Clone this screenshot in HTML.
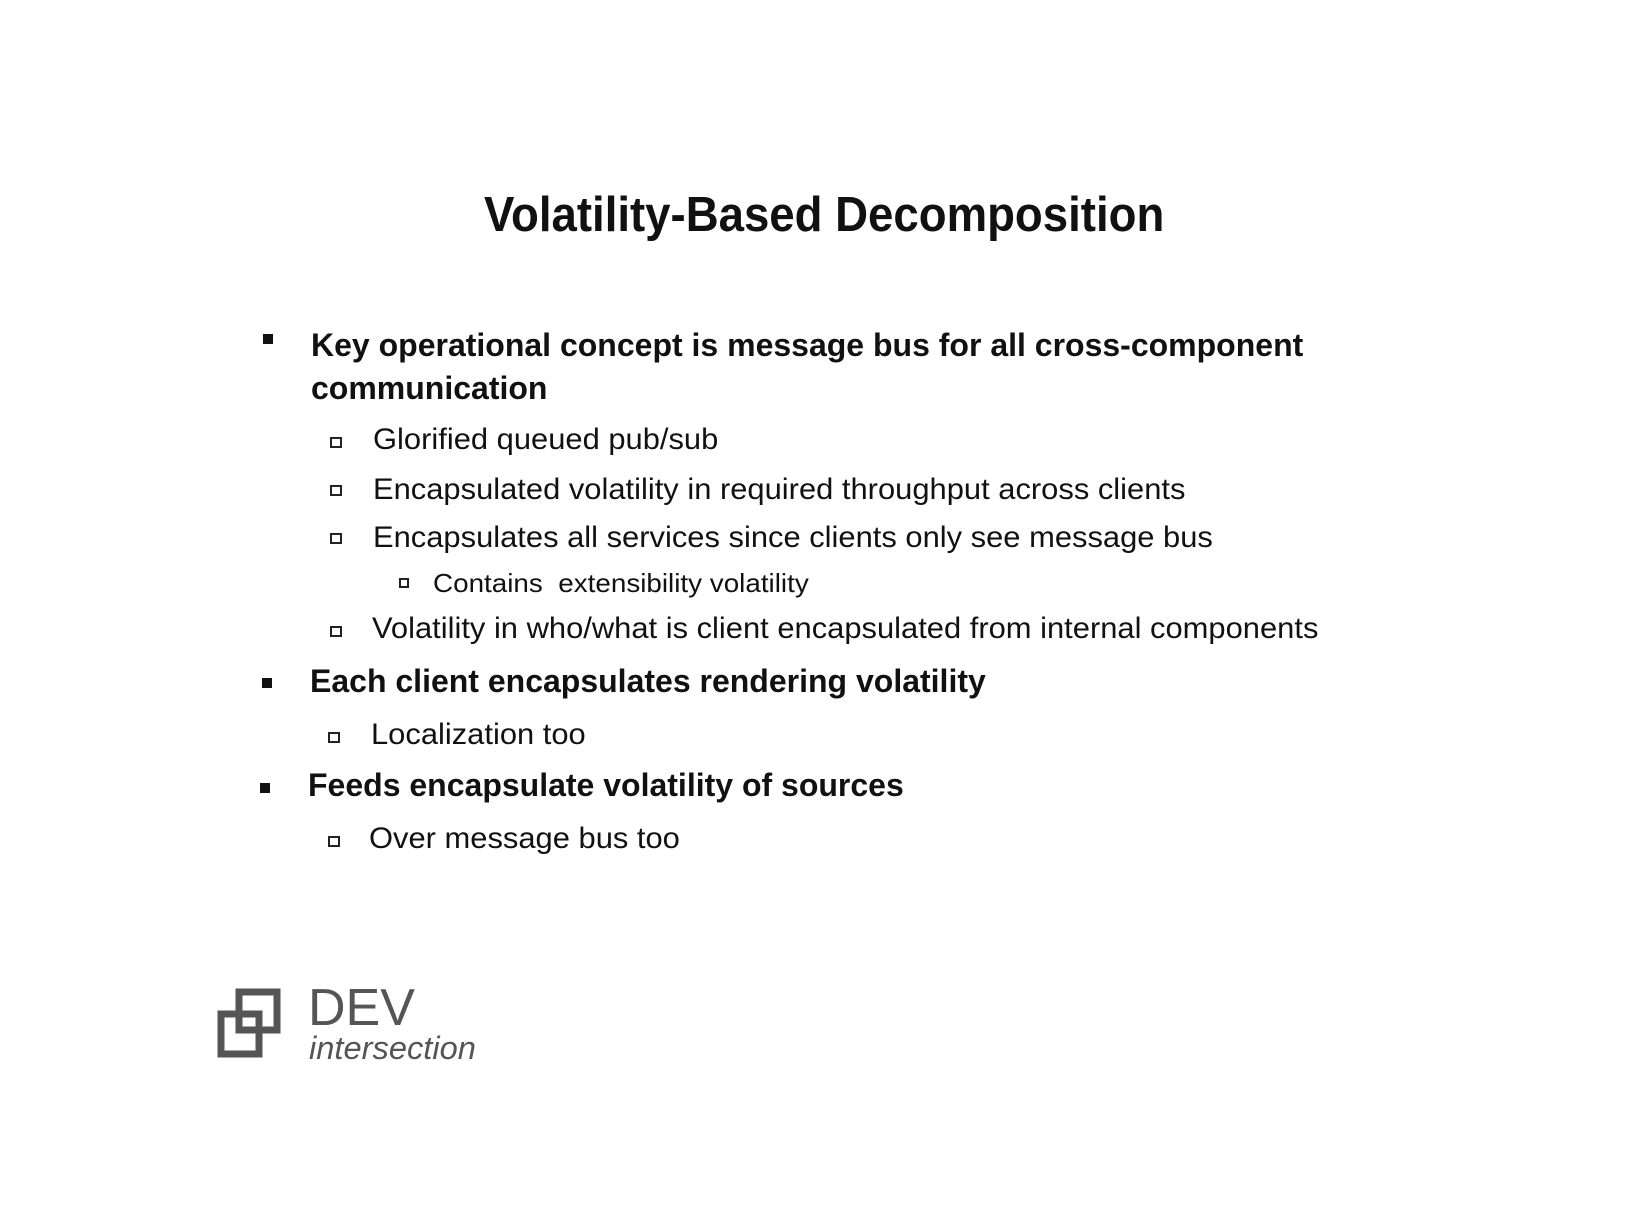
<!DOCTYPE html>
<html><head><meta charset="utf-8"><style>
body{margin:0;width:1632px;height:1224px;background:#fff;position:relative;overflow:hidden;font-family:"Liberation Sans",sans-serif;color:#111}
.t{position:absolute;white-space:nowrap;line-height:1;transform-origin:left top;transform:scaleX(1.03)}
.b{font-weight:bold;transform:scaleX(1.0)}
.sq{position:absolute;width:10px;height:10px;background:#111}
.hs{position:absolute;width:8px;height:7px;border:2px solid #222}
</style></head><body>
<div class="t b" style="left:484px;top:191px;font-size:49px;transform:scaleX(0.93)">Volatility-Based Decomposition</div>

<div class="sq" style="left:263px;top:334px"></div>
<div class="t b" style="left:311px;top:329px;font-size:32px">Key operational concept is message bus for all cross-component</div>
<div class="t b" style="left:311px;top:372px;font-size:32px">communication</div>

<div class="hs" style="left:330px;top:437px"></div>
<div class="t" style="left:373px;top:425px;font-size:30px">Glorified queued pub/sub</div>
<div class="hs" style="left:330px;top:485px"></div>
<div class="t" style="left:373px;top:475px;font-size:30px">Encapsulated volatility in required throughput across clients</div>
<div class="hs" style="left:330px;top:533px"></div>
<div class="t" style="left:373px;top:523px;font-size:30px">Encapsulates all services since clients only see message bus</div>
<div class="hs" style="left:399px;top:578px;width:6px;height:6px"></div>
<div class="t" style="left:433px;top:570px;font-size:26px;transform:scaleX(1.07)">Contains&nbsp; extensibility volatility</div>
<div class="hs" style="left:330px;top:626px"></div>
<div class="t" style="left:372px;top:614px;font-size:30px">Volatility in who/what is client encapsulated from internal components</div>

<div class="sq" style="left:262px;top:678px"></div>
<div class="t b" style="left:310px;top:665px;font-size:32px">Each client encapsulates rendering volatility</div>
<div class="hs" style="left:328px;top:732px"></div>
<div class="t" style="left:371px;top:720px;font-size:30px">Localization too</div>

<div class="sq" style="left:260px;top:783px"></div>
<div class="t b" style="left:308px;top:769px;font-size:32px">Feeds encapsulate volatility of sources</div>
<div class="hs" style="left:328px;top:836px"></div>
<div class="t" style="left:369px;top:824px;font-size:30px">Over message bus too</div>

<svg style="position:absolute;left:215px;top:988px" width="70" height="76" viewBox="0 0 70 76">
<g fill="none" stroke="#555" stroke-width="7">
<rect x="24" y="4" width="38" height="38"/>
<rect x="6" y="26" width="38" height="40"/>
</g></svg>
<div class="t" style="left:308px;top:982px;font-size:52px;color:#555;transform:scaleX(1.0)">DEV</div>
<div class="t" style="left:309px;top:1032px;font-size:32px;color:#555;font-style:italic;transform:scaleX(1.02)">intersection</div>
</body></html>
